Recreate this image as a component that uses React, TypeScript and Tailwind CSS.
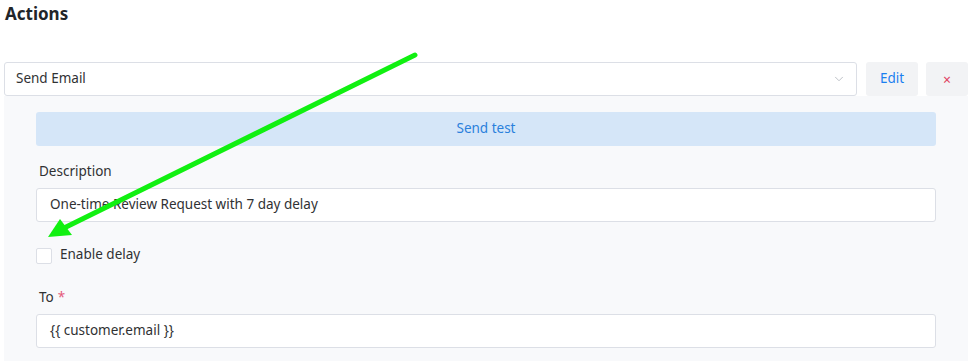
import { ChevronDown } from 'lucide-react'

const font = { fontFamily: '"Noto Sans", "Open Sans", sans-serif' }

function Field({ label, value, required }: { label: string; value: string; required?: boolean }) {
  return (
    <div className="flex flex-col">
      <label className="h-[24px] px-[3px] text-[13.5px] leading-[26px] text-[#303133]">
        {label}
        {required && <span className="ml-1 text-[#e4587a]">*</span>}
      </label>
      <div className="mt-[6px] flex h-[34px] items-center rounded-[3px] border border-[#dcdfe6] bg-white px-[13px] pb-[2px] text-[13.5px] text-[#303133]">
        {value}
      </div>
    </div>
  )
}

export default function App() {
  return (
    <div className="relative h-[361px] w-[974px] overflow-hidden bg-white" style={font}>
      <h2 className="px-[5px] pt-[2px] text-[17px] font-bold leading-[24px] text-[#212529]">Actions</h2>

      <div className="mt-[36px] flex gap-[9px] pl-[4px] pr-[6px]">
        <div className="flex h-[34px] flex-1 items-center justify-between rounded-[3px] border border-[#dcdfe6] bg-white pl-[11px] pr-[10px] pb-[2px] text-[13.5px] text-[#303133]">
          <span>Send Email</span>
          <ChevronDown size={14} strokeWidth={1.5} className="mt-[2px] text-[#b4b8bf]" />
        </div>
        <button className="h-[34px] w-[52px] rounded-[3px] bg-[#f2f3f5] pb-[2px] text-[13.5px] text-[#1a7ff0]">Edit</button>
        <button className="ml-[-1px] flex h-[34px] w-[42px] items-center justify-center rounded-[3px] bg-[#f2f3f5] text-[14px] text-[#e0405e]">
          ×
        </button>
      </div>

      <div className="mx-[4px] mr-[6px] flex flex-col bg-[#f8f9fb] px-[32px] pt-[16px] pb-[14px]">
        <button className="h-[34px] rounded-[3px] bg-[#d5e6f8] pb-[2px] text-[13.5px] text-[#2a80dc]">Send test</button>

        <div className="mt-[12px]">
          <Field label="Description" value="One-time Review Request with 7 day delay" />
        </div>

        <label className="mt-[25px] flex h-[17px] items-center gap-[8px] text-[13.5px] text-[#303133]">
          <span className="h-[16px] w-[16px] rounded-[2px] border border-[#dcdfe6] bg-white" />
          <span className="mt-[-3px]">Enable delay</span>
        </label>

        <div className="mt-[20px]">
          <Field label="To" value="{{ customer.email }}" required />
        </div>
      </div>

      <svg className="pointer-events-none absolute left-0 top-0" width="974" height="361">
        <line x1="415" y1="55" x2="62" y2="229" stroke="#11f011" strokeWidth="5" strokeLinecap="round" />
        <polygon points="48,237 72,235 60,219" fill="#11f011" />
      </svg>
    </div>
  )
}
